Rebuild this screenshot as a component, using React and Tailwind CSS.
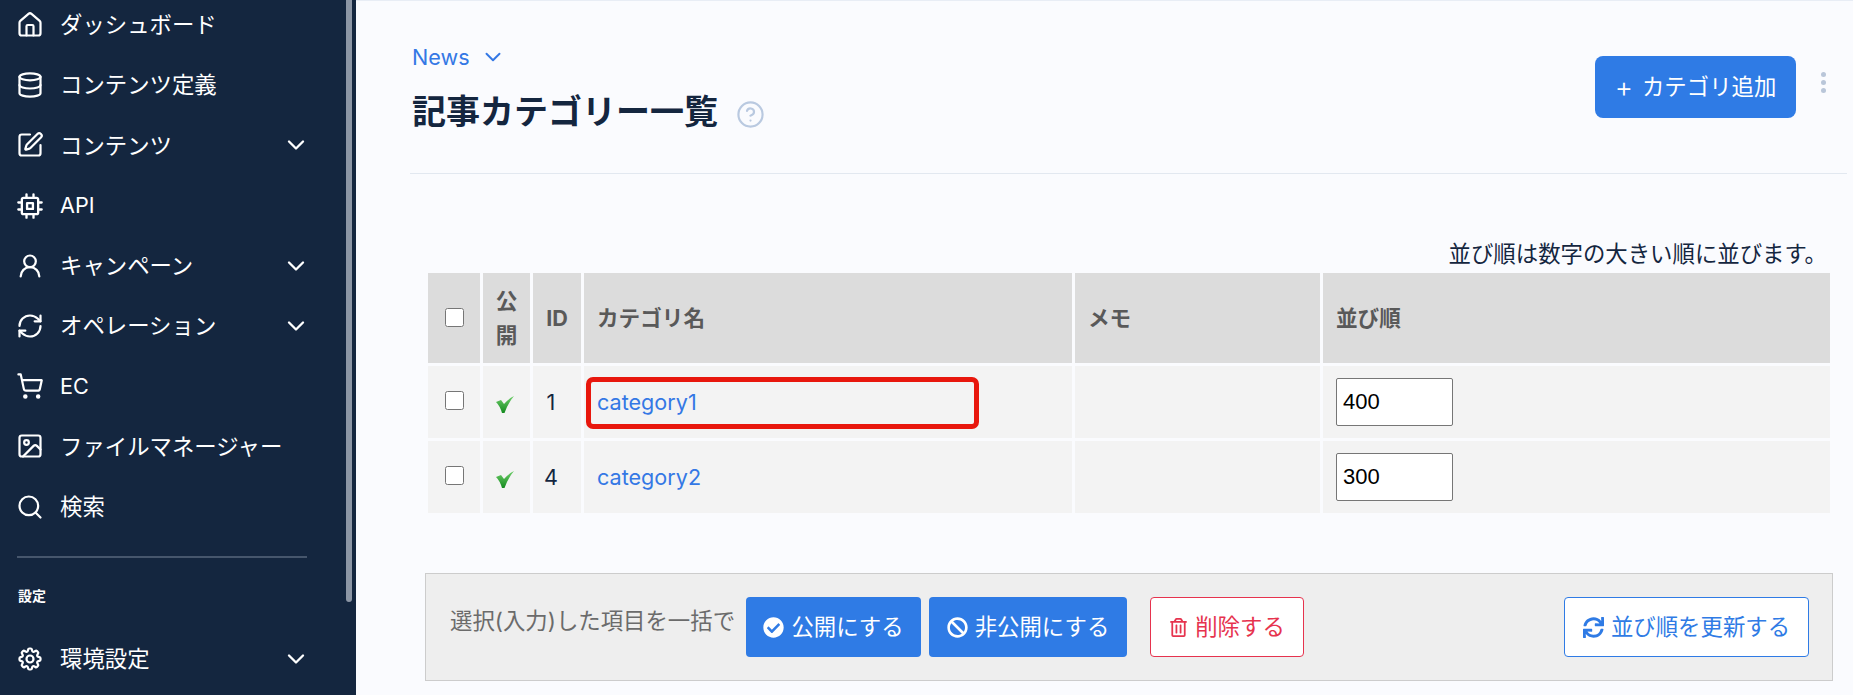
import React from "react";
import {
  LuHouse,
  LuDatabase,
  LuSquarePen,
  LuUserRound,
  LuRefreshCw,
  LuShoppingCart,
  LuImage,
  LuSearch,
  LuChevronDown,
  LuCircleHelp,
} from "react-icons/lu";
import { HiOutlineCog8Tooth } from "react-icons/hi2";
import { FaCheckCircle, FaBan, FaRegTrashAlt, FaSync } from "react-icons/fa";

const ChipIcon = ({ size }) => (
  <svg width={size} height={size} viewBox="0 0 24 24" fill="none" stroke="currentColor" strokeWidth="2" strokeLinejoin="round" strokeLinecap="round">
    <rect x="5" y="5" width="14" height="14" rx="1.5" />
    <rect x="9.5" y="9.5" width="5" height="5" />
    <path d="M9 2v3M15 2v3M9 19v3M15 19v3M2 9h3M2 15h3M19 9h3M19 15h3" />
  </svg>
);

const MENU = [
  { label: "ダッシュボード", Icon: LuHouse },
  { label: "コンテンツ定義", Icon: LuDatabase },
  { label: "コンテンツ", Icon: LuSquarePen, open: true },
  { label: "API", Icon: ChipIcon, latin: true },
  { label: "キャンペーン", Icon: LuUserRound, open: true },
  { label: "オペレーション", Icon: LuRefreshCw, open: true },
  { label: "EC", Icon: LuShoppingCart, latin: true },
  { label: "ファイルマネージャー", Icon: LuImage },
  { label: "検索", Icon: LuSearch },
];

const MenuItem = ({ label, Icon, open, latin }) => (
  <div className="flex h-[60.2px] items-center pl-[16px] pr-[46px] text-white">
    <Icon size={28} strokeWidth={1.9} className="shrink-0" />
    <span className={latin ? "ml-[16px] flex-1 text-[21.6px]" : "ml-[16px] flex-1 text-[22.4px]"}>{label}</span>
    {open && <LuChevronDown size={28} strokeWidth={2} />}
  </div>
);

const GreenCheck = () => (
  <svg width="19" height="18" viewBox="0 0 19 18" className="block">
    <defs>
      <linearGradient id="chk" x1="0" y1="0" x2="0" y2="1">
        <stop offset="0" stopColor="#6fcf6a" />
        <stop offset="1" stopColor="#148a1f" />
      </linearGradient>
    </defs>
    <path d="M0 7 L5 5 L8 9 Q12 4 18 1 Q12 8 8.5 18 L6 18 Q4 11 0 7 Z" fill="url(#chk)" />
  </svg>
);

const Row = ({ id, name, order, marked }) => (
  <tr className="h-[72px] text-[21.6px]">
    <td className="bg-[#f3f3f3] text-center">
      <input type="checkbox" className="-mt-[6px] h-[19px] w-[19px] align-middle" />
    </td>
    <td className="bg-[#f3f3f3]">
      <div className="flex justify-center pr-[3px] pt-[3px]">
        <GreenCheck />
      </div>
    </td>
    <td className="bg-[#f3f3f3] pr-[12px] text-center text-[#14263f]">{id}</td>
    <td className="relative bg-[#f3f3f3] px-[13px] text-[#3478e5]">
      {name}
      {marked && (
        <div className="absolute left-[2px] top-[11px] h-[52px] w-[393px] rounded-[7px] border-[5px] border-[#e8170d]" />
      )}
    </td>
    <td className="bg-[#f3f3f3]" />
    <td className="bg-[#f3f3f3] px-[13px]">
      <input
        type="text"
        defaultValue={order}
        className="block h-[48px] w-[117px] rounded-[2px] border border-[#767676] bg-white px-[6px] font-['Liberation_Sans',sans-serif] text-[22px] text-black"
      />
    </td>
  </tr>
);

const App = () => {
  return (
    <div className="flex h-[695px] w-full overflow-hidden bg-[#fafbfe] font-['Inter','Noto_Sans_CJK_JP',sans-serif]">
      <aside className="relative h-full w-[356px] shrink-0 bg-[#14263f]">
        <div className="-mt-[5px]">
          {MENU.map((item) => (
            <MenuItem key={item.label} {...item} />
          ))}
        </div>
        <div className="ml-[17px] mr-[49px] mt-[19px] border-t-2 border-[#46566c]" />
        <p className="ml-[18px] mt-[28px] text-[14px] font-bold leading-5 text-white">設定</p>
        <div className="mt-[23px]">
          <MenuItem label="環境設定" Icon={HiOutlineCog8Tooth} open />
        </div>
        <div className="absolute right-[4px] top-0 h-[602px] w-[6px] rounded-b-full bg-[#8c96a5]" />
      </aside>

      <main className="min-w-0 flex-1 border-t border-[#e8edf5] pl-[54px] pr-[6px]">
        <header className="flex h-[173px] justify-between border-b border-[#e2e8f0] pl-[2px]">
          <div>
            <div className="mt-[42px] flex items-center text-[21.6px] leading-7 text-[#3478e5]">
              News
              <LuChevronDown size={26} strokeWidth={1.8} className="ml-[10px]" />
            </div>
            <div className="mt-[15px] flex items-center">
              <h1 className="text-[34px] font-bold leading-[52px] text-[#14263f]">記事カテゴリー一覧</h1>
              <LuCircleHelp size={29} strokeWidth={1.8} className="ml-[18px] mt-[4px] text-[#b9c9e0]" />
            </div>
          </div>
          <div className="mr-[21px] mt-[55px] flex items-start">
            <button className="flex h-[62px] w-[201px] items-center justify-center gap-[9px] rounded-[8px] bg-[#2f7be5] text-[22.4px] text-white">
              <span className="text-[28px] font-light leading-none">+</span>
              カテゴリ追加
            </button>
            <div className="ml-[25px] mt-[16px] flex flex-col gap-[3px]">
              <span className="h-[5px] w-[5px] rounded-full bg-[#b9c6d9]" />
              <span className="h-[5px] w-[5px] rounded-full bg-[#b9c6d9]" />
              <span className="h-[5px] w-[5px] rounded-full bg-[#b9c6d9]" />
            </div>
          </div>
        </header>

        <div className="ml-[15px] mr-[14px]">
          <p className="mt-[66px] h-[30px] pr-[6px] text-right text-[22.4px] leading-7 text-[#14263f]">
            並び順は数字の大きい順に並びます。
          </p>
          <table className="w-full table-fixed border-separate border-spacing-[3px]">
            <thead>
              <tr className="h-[90px] text-[21.6px] font-bold text-[#595959]">
                <th className="w-[52px] bg-[#dcdcdc]">
                  <input type="checkbox" className="-mt-[4px] h-[19px] w-[19px] align-middle" />
                </th>
                <th className="w-[47px] bg-[#dcdcdc] font-bold leading-[34px]">
                  公<br />開
                </th>
                <th className="w-[48px] bg-[#dcdcdc] font-bold">ID</th>
                <th className="w-[488px] bg-[#dcdcdc] px-[13px] text-left font-bold">カテゴリ名</th>
                <th className="w-[245px] bg-[#dcdcdc] px-[13px] text-left font-bold">メモ</th>
                <th className="bg-[#dcdcdc] px-[13px] text-left font-bold">並び順</th>
              </tr>
            </thead>
            <tbody>
              <Row id="1" name="category1" order="400" marked />
              <Row id="4" name="category2" order="300" />
            </tbody>
          </table>

          <div className="mt-[57px] flex h-[108px] items-start border border-[#cccccc] bg-[#eeeeee] pl-[24px] pr-[23px] pt-[23px] text-[22.4px]">
            <span className="mt-[10px] w-[296px] leading-7 text-[#6b6b6b]">選択(入力)した項目を一括で</span>
            <button className="flex h-[60px] w-[175px] items-center justify-center gap-[7px] rounded-[4px] bg-[#2f7be5] text-white">
              <FaCheckCircle size={21} />
              公開にする
            </button>
            <button className="ml-[8px] flex h-[60px] w-[198px] items-center justify-center gap-[7px] rounded-[4px] bg-[#2f7be5] text-white">
              <FaBan size={21} />
              非公開にする
            </button>
            <button className="ml-[23px] flex h-[60px] w-[154px] items-center justify-center gap-[7px] rounded-[4px] border border-[#e6334e] bg-white text-[#e6334e]">
              <FaRegTrashAlt size={19} />
              削除する
            </button>
            <button className="ml-auto flex h-[60px] w-[245px] items-center justify-center gap-[7px] rounded-[4px] border border-[#2f7be5] bg-white text-[#2f7be5]">
              <FaSync size={21} />
              並び順を更新する
            </button>
          </div>
        </div>
      </main>
    </div>
  );
};

export default App;
